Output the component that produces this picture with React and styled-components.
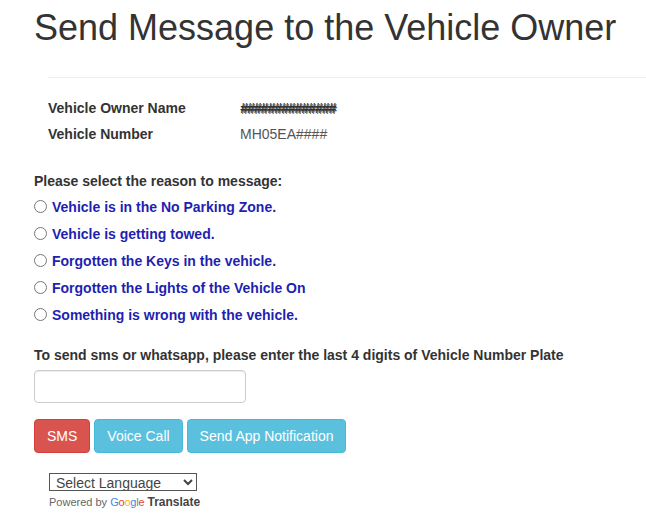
import styled, { createGlobalStyle } from "styled-components";

const GlobalStyle = createGlobalStyle`
  body {
    margin: 0;
    background: #fff;
    font-family: "Liberation Sans", Arial, sans-serif;
    color: #333;
  }
`;

const reasons = [
  "Vehicle is in the No Parking Zone.",
  "Vehicle is getting towed.",
  "Forgotten the Keys in the vehicle.",
  "Forgotten the Lights of the Vehicle On",
  "Something is wrong with the vehicle.",
];

const googleLetters = [
  ["G", "#4285f4"],
  ["o", "#ea4335"],
  ["o", "#fbbc05"],
  ["g", "#4285f4"],
  ["l", "#34a853"],
  ["e", "#ea4335"],
];

const App = () => {
  return (
    <Page>
      <GlobalStyle />
      <Title>Send Message to the Vehicle Owner</Title>
      <Details>
        <Rule />
        <InfoGrid>
          <InfoLabel>Vehicle Owner Name</InfoLabel>
          <HiddenName>##############</HiddenName>
          <InfoLabel>Vehicle Number</InfoLabel>
          <InfoValue>MH05EA####</InfoValue>
        </InfoGrid>
      </Details>

      <Question>Please select the reason to message:</Question>
      <ReasonList>
        {reasons.map((r) => (
          <Reason key={r}>
            <Radio type="radio" name="reason" />
            {r}
          </Reason>
        ))}
      </ReasonList>

      <PlateLabel>
        To send sms or whatsapp, please enter the last 4 digits of Vehicle Number Plate
      </PlateLabel>
      <PlateInput type="text" />

      <Actions>
        <Button $variant="danger">SMS</Button>
        <Button $variant="info">Voice Call</Button>
        <Button $variant="info">Send App Notification</Button>
      </Actions>

      <Translate>
        <LanguageSelect defaultValue="">
          <option value="">Select Language</option>
        </LanguageSelect>
        <Powered>
          Powered by{" "}
          <GoogleMark>
            {googleLetters.map(([l, c], i) => (
              <span key={i} style={{ color: c }}>
                {l}
              </span>
            ))}
          </GoogleMark>{" "}
          <TranslateLink>Translate</TranslateLink>
        </Powered>
      </Translate>
    </Page>
  );
};

const Page = styled.div`
  padding: 0 0 0 34px;
  font-size: 14px;
`;

const Title = styled.h1`
  margin: 8px 0 0;
  font-size: 36px;
  font-weight: 500;
  line-height: 1.1;
  color: #333;
`;

const Details = styled.div`
  margin-left: 14px;
`;

const Rule = styled.hr`
  margin: 29px 0 17px;
  border: 0;
  border-top: 1px solid #eee;
`;

const InfoGrid = styled.div`
  display: grid;
  grid-template-columns: 192px auto;
  line-height: 26px;
`;

const InfoLabel = styled.div`
  font-weight: bold;
  color: #333;
`;

const InfoValue = styled.div`
  color: #555;
`;

const HiddenName = styled.div`
  font-weight: bold;
  font-style: italic;
  letter-spacing: -1px;
  color: #333;
  text-shadow: 1px 1px 0 #666;
`;

const Question = styled.div`
  margin-top: 24px;
  line-height: 20px;
  font-weight: bold;
`;

const ReasonList = styled.div`
  margin-top: 3px;
  display: flex;
  flex-direction: column;
`;

const Reason = styled.label`
  display: flex;
  align-items: center;
  height: 27px;
  font-weight: bold;
  color: #1f1fb0;
`;

const Radio = styled.input`
  margin: 0 5px 1px 0;
  width: 13px;
  height: 13px;
`;

const PlateLabel = styled.div`
  margin-top: 16px;
  line-height: 20px;
  font-weight: bold;
`;

const PlateInput = styled.input`
  display: block;
  box-sizing: border-box;
  margin-top: 5px;
  width: 212px;
  height: 33px;
  padding: 6px 12px;
  border: 1px solid #ccc;
  border-radius: 4px;
  box-shadow: inset 0 1px 1px rgba(0, 0, 0, 0.075);
  font-size: 14px;
`;

const Actions = styled.div`
  display: flex;
  gap: 4px;
  margin-top: 16px;
`;

const Button = styled.button`
  box-sizing: border-box;
  height: 34px;
  padding: 6px 12px;
  font-family: inherit;
  font-size: 14px;
  line-height: 20px;
  color: #fff;
  border-radius: 4px;
  border: 1px solid
    ${(p) => (p.$variant === "danger" ? "#d43f3a" : "#46b8da")};
  background: ${(p) => (p.$variant === "danger" ? "#d9534f" : "#5bc0de")};
`;

const Translate = styled.div`
  margin: 20px 0 0 15px;
`;

const LanguageSelect = styled.select`
  display: block;
  box-sizing: border-box;
  width: 148px;
  height: 18px;
  padding: 0 0 0 2px;
  font-family: inherit;
  font-size: 14px;
  color: #444;
  border: 1px solid #555;
  border-radius: 0;
  background: #fff;
`;

const Powered = styled.div`
  margin-top: 4px;
  font-size: 11px;
  line-height: 14px;
  color: #666;
`;

const GoogleMark = styled.span`
  font-size: 11px;
  letter-spacing: -0.2px;
`;

const TranslateLink = styled.span`
  font-size: 12px;
  font-weight: bold;
  color: #444;
`;

export default App;
